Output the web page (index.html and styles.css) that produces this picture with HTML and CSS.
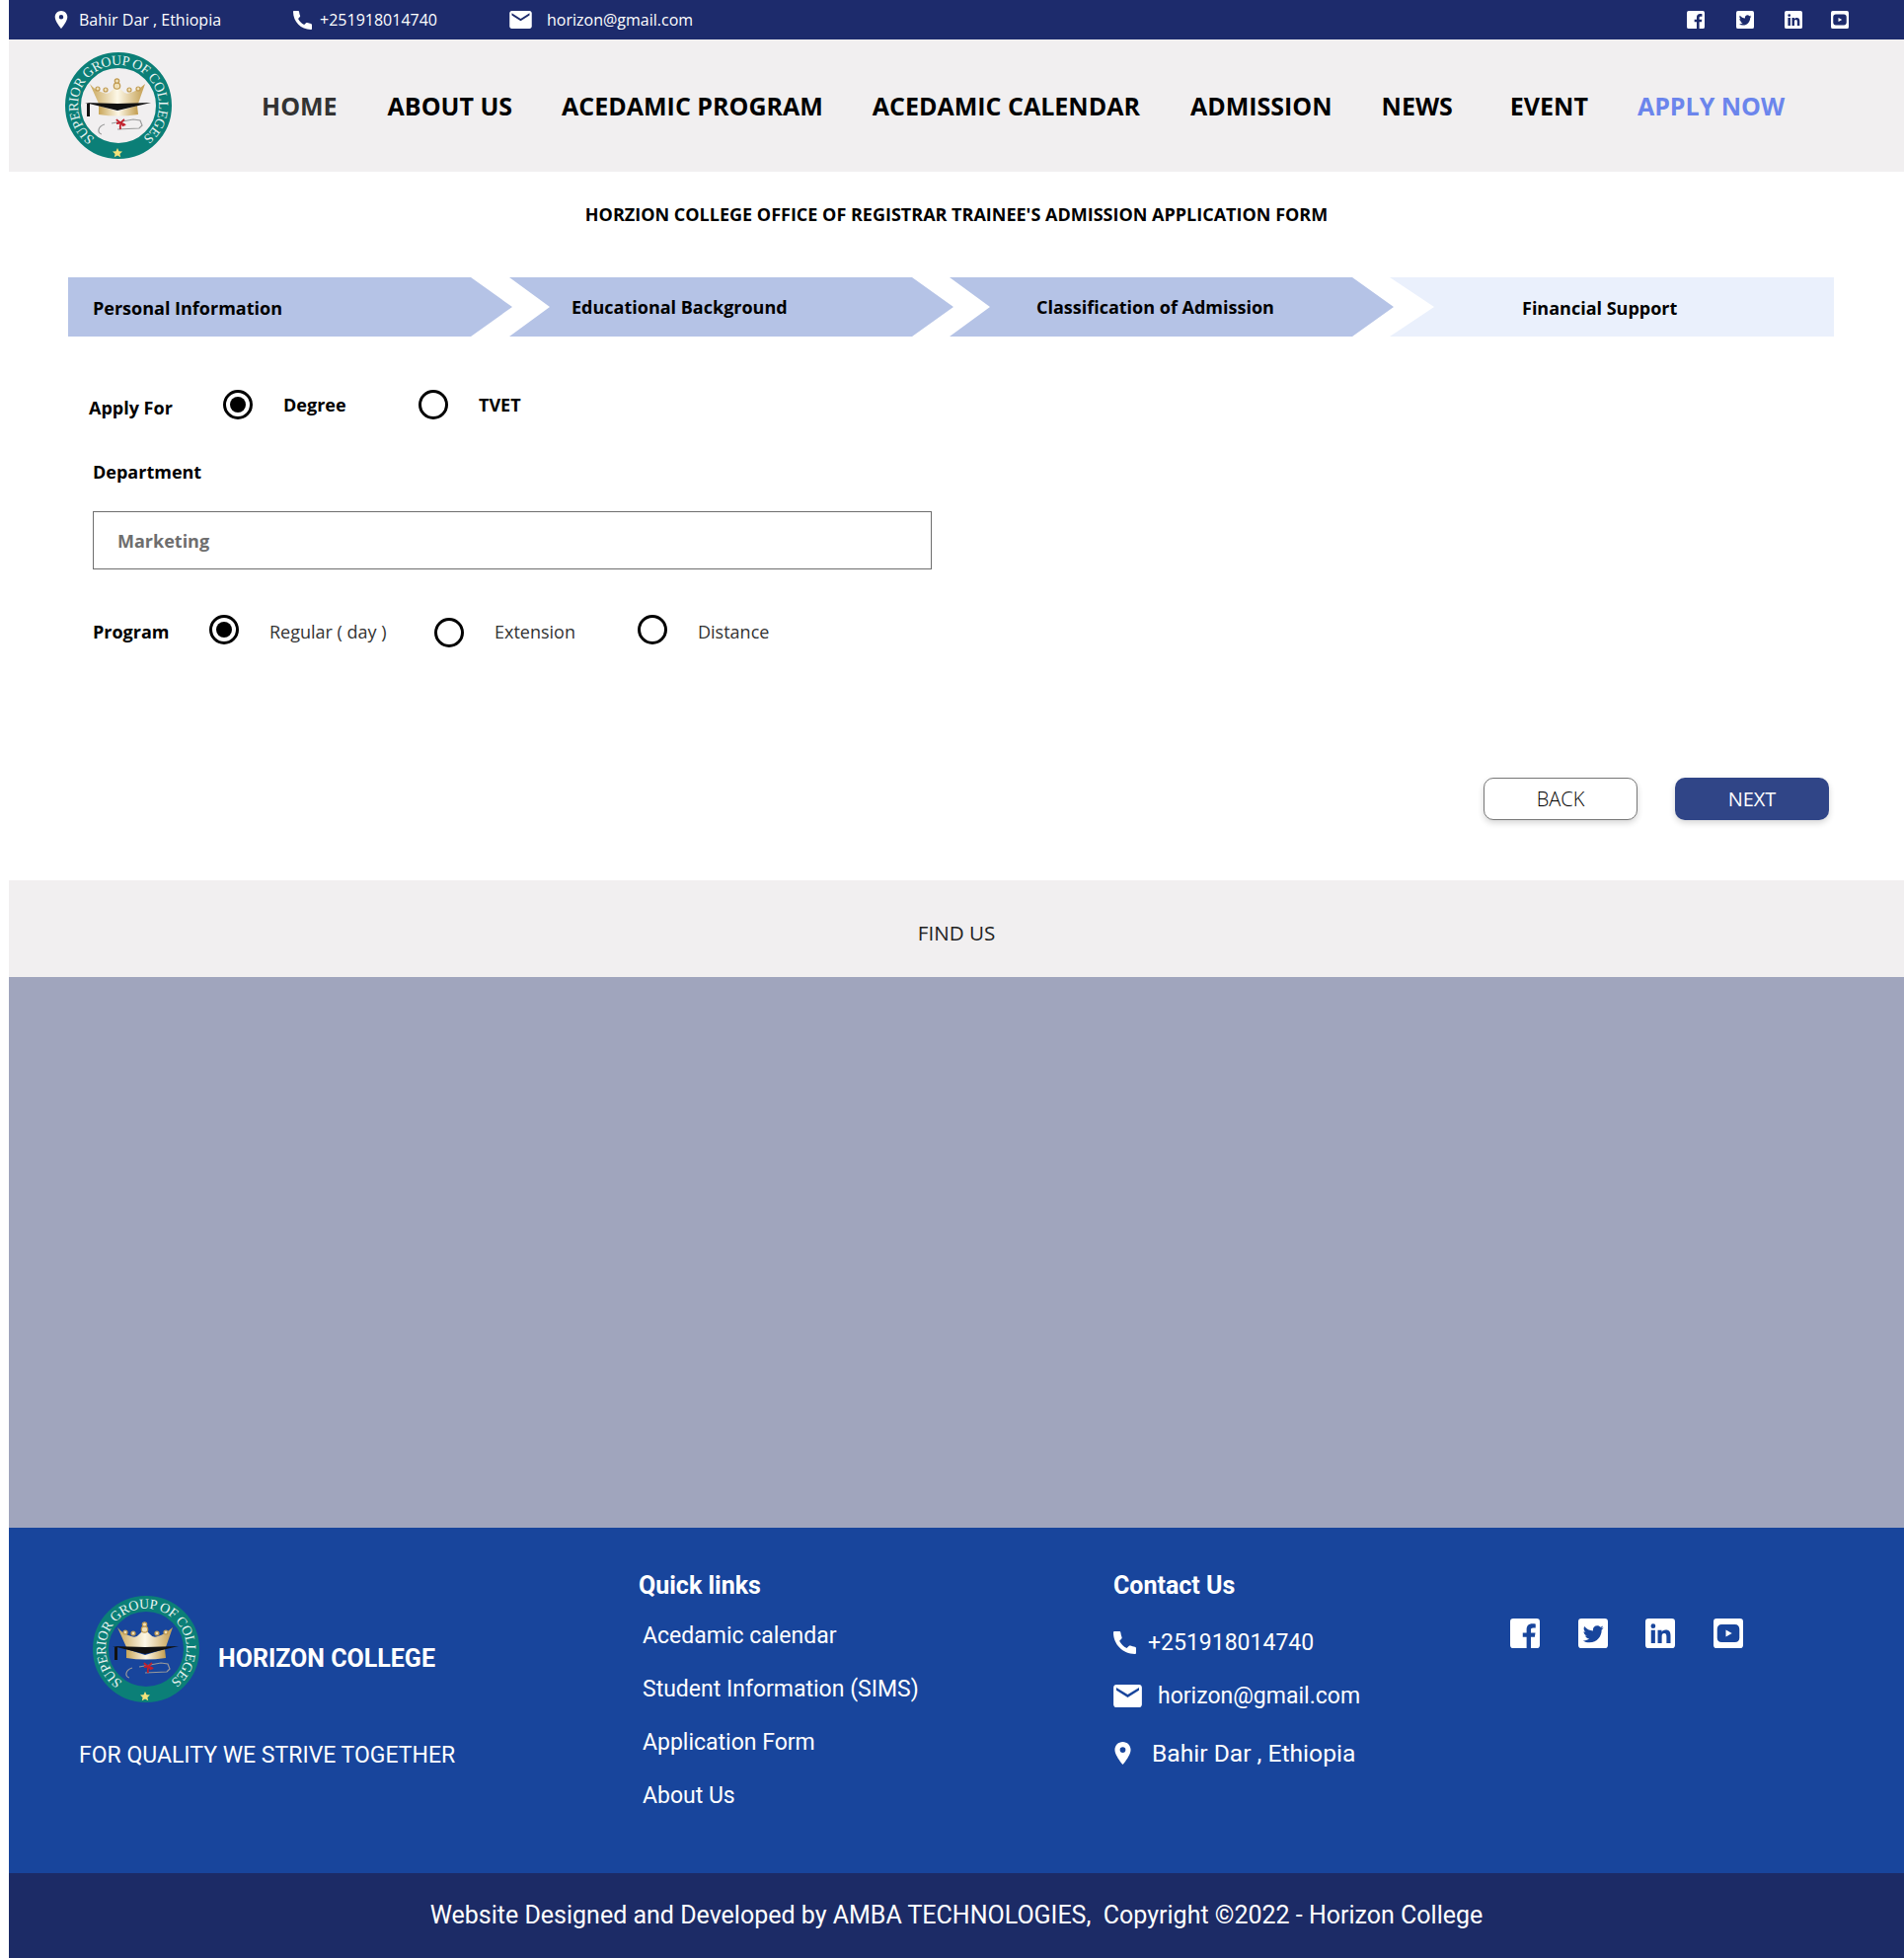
FILE: index.html
```html
<!DOCTYPE html>
<html lang="en">
<head>
<meta charset="utf-8">
<title>Horizon College - Admission Application</title>
<link rel="stylesheet" href="styles.css">
</head>
<body>
<svg class="defs" width="0" height="0" aria-hidden="true">
  <defs>
    <symbol id="i-pin" viewBox="5 2 14 20"><path fill-rule="evenodd" d="M12 2C8.100 2 5 5.100 5 9c0 5.200 7 13 7 13s7-7.800 7-13c0-3.900-3.100-7-7-7zm0 9.500a2.500 2.500 0 1 1 0-5 2.500 2.500 0 0 1 0 5z"/></symbol>
    <symbol id="i-phone" viewBox="3 3 18 18"><path d="M4 3h3.500C8.300 3 8.700 3.400 8.800 4.100C9 5.400 9.200 6.400 9.700 7.600C9.900 8.100 9.800 8.500 9.500 8.800L7.800 10.600C9.200 13.300 11 15 13.600 16.300L15.400 14.600C15.700 14.300 16.100 14.200 16.600 14.400C17.800 14.900 18.800 15.100 20.100 15.300C20.700 15.400 21 15.800 21 16.400V20C21 20.600 20.600 21 20 21C10.600 21 3 13.400 3 4C3 3.400 3.400 3 4 3z"/></symbol>
    <symbol id="i-mail" viewBox="2 4 20 16"><path d="M20 4H4c-1.100 0-2 .9-2 2v12c0 1.100.9 2 2 2h16c1.100 0 2-.9 2-2V6c0-1.100-.9-2-2-2zm0 4l-8 5-8-5V6l8 5 8-5v2z"/></symbol>
    <symbol id="i-fb" viewBox="0 0 24 24"><path fill-rule="evenodd" d="M2.500 0h19A2.500 2.500 0 0 1 24 2.500v19a2.500 2.500 0 0 1-2.500 2.500h-4.700v-9h3.100l.5-3.500h-3.600V9.300c0-1.100.4-1.800 1.900-1.800h1.900V4.300c-.4-.1-1.500-.2-2.700-.2-2.800 0-4.600 1.700-4.600 4.700v2.700H10.200V15h3.100v9H2.500A2.500 2.500 0 0 1 0 21.500v-19A2.500 2.500 0 0 1 2.500 0z"/></symbol>
    <symbol id="i-tw" viewBox="0 0 24 24"><path fill-rule="evenodd" d="M2.500 0h19A2.500 2.500 0 0 1 24 2.500v19a2.500 2.500 0 0 1-2.500 2.500h-19A2.500 2.500 0 0 1 0 21.500v-19A2.500 2.500 0 0 1 2.500 0zM20.500 7.300c-.6.300-1.300.5-2 .6.700-.4 1.300-1.100 1.500-1.900-.7.400-1.400.7-2.200.9-.6-.7-1.500-1.100-2.500-1.100-1.900 0-3.400 1.500-3.400 3.400 0 .3 0 .5.100.8-2.800-.1-5.300-1.500-7-3.600-.3.500-.5 1.100-.5 1.700 0 1.200.6 2.200 1.500 2.800-.6 0-1.100-.2-1.600-.4v0c0 1.700 1.200 3 2.800 3.400-.5.100-1 .1-1.500.1.400 1.300 1.700 2.300 3.200 2.400-1.200.9-2.700 1.500-4.300 1.500h-.8c1.500 1 3.300 1.500 5.300 1.500 6.300 0 9.800-5.200 9.800-9.800v-.4c.7-.5 1.200-1.100 1.600-1.900z"/></symbol>
    <symbol id="i-in" viewBox="0 0 24 24"><path fill-rule="evenodd" d="M2.500 0h19A2.500 2.500 0 0 1 24 2.500v19a2.500 2.500 0 0 1-2.500 2.500h-19A2.500 2.500 0 0 1 0 21.500v-19A2.500 2.500 0 0 1 2.500 0zM4.600 9.400V20h3.300V9.400zM6.300 4.200a1.900 1.900 0 1 0 0 3.800 1.900 1.900 0 0 0 0-3.800zM10 9.400V20h3.300v-5.300c0-1.400.3-2.700 2-2.700s1.800 1.500 1.800 2.800V20h3.300v-5.800c0-2.900-.6-5-4-5-1.600 0-2.700.9-3.200 1.700V9.400z"/></symbol>
    <symbol id="i-yt" viewBox="0 0 24 24"><path fill-rule="evenodd" d="M2.500 0h19A2.500 2.500 0 0 1 24 2.500v19a2.500 2.500 0 0 1-2.500 2.500h-19A2.500 2.500 0 0 1 0 21.500v-19A2.500 2.500 0 0 1 2.500 0zM6.500 4.800C4.500 4.800 3 6.300 3 8.300v7.400c0 2 1.500 3.500 3.500 3.500h11c2 0 3.500-1.500 3.500-3.500V8.300c0-2-1.500-3.500-3.500-3.500zM10 9.200l5 2.800-5 2.800z"/></symbol>
    <path id="logo-arc" d="M30 87A41 41 0 1 1 78 87"/>
    <linearGradient id="gold" x1="0" y1="0" x2="1" y2="0">
      <stop offset="0" stop-color="#c9a659"/>
      <stop offset=".5" stop-color="#fdf8e8"/>
      <stop offset="1" stop-color="#c29c4d"/>
    </linearGradient>
    <symbol id="logo" viewBox="0 0 108 108">
      <circle cx="54" cy="54" r="46" fill="none" stroke="#0b7f77" stroke-width="16"/>
      <text class="logo-text"><textPath href="#logo-arc" textLength="205" lengthAdjust="spacing">SUPERIOR GROUP OF COLLEGES</textPath></text>
      <path fill="url(#gold)" d="M25 32Q30 38 36 40L39 41Q44 43 47 39L50 36H55L58 39Q61 43 66 41Q73 39 81 32L74 52H34z"/>
      <g fill="#efe0b8" stroke="#c09a50" stroke-width="1.200">
        <circle cx="33" cy="37" r="2"/>
        <circle cx="41" cy="38" r="2"/>
        <circle cx="65" cy="38" r="2"/>
        <circle cx="74" cy="37" r="2"/>
        <circle cx="52.500" cy="34" r="3.200"/>
        <circle cx="52.500" cy="29" r="2.200"/>
      </g>
      <path fill="url(#gold)" d="M34 54L53 60L73 54L74 63Q53 66 34 63z"/>
      <path fill="#111" d="M20 51L53 52L87 51L53 59zM22 52h3v13h-3z"/>
      <path fill="none" stroke="#9a9a9a" stroke-width="1.200" d="M47 72L69 68L76 69L78 74L75 77L53 78M40 73C33 75 32 82 37 83"/>
      <path fill="none" stroke="#c2202c" stroke-width="1.800" d="M52 68C54 71 58 71 59 75M60 68C57 70 55 73 56 78M52 72C55 72 59 71 61 74"/>
      <path fill="#f5e27a" d="M53 97L54.500 100.200L58 100.600L55.400 102.900L56.200 106.300L53 104.500L49.800 106.300L50.600 102.900L48 100.600L51.500 100.200z"/>
    </symbol>
  </defs>
</svg>

<div class="topbar">
  <div class="top-item"><svg class="ic ic-pin"><use href="#i-pin"/></svg><span class="gap-11">Bahir Dar , Ethiopia</span></div>
  <div class="top-item"><svg class="ic ic-phone"><use href="#i-phone"/></svg><span class="gap-8">+251918014740</span></div>
  <div class="top-item"><svg class="ic ic-mail"><use href="#i-mail"/></svg><span class="gap-15">horizon@gmail.com</span></div>
  <div class="top-social">
    <svg class="soc-s"><use href="#i-fb"/></svg>
    <svg class="soc-s soc-2"><use href="#i-tw"/></svg>
    <svg class="soc-s soc-3"><use href="#i-in"/></svg>
    <svg class="soc-s soc-4"><use href="#i-yt"/></svg>
  </div>
</div>

<header class="nav">
  <svg class="logo-nav"><use href="#logo"/></svg>
  <nav class="menu">
    <a class="menu-home">HOME</a>
    <a>ABOUT US</a>
    <a>ACEDAMIC PROGRAM</a>
    <a>ACEDAMIC CALENDAR</a>
    <a class="menu-adm">ADMISSION</a>
    <a>NEWS</a>
    <a class="menu-event">EVENT</a>
    <a class="menu-apply">APPLY NOW</a>
  </nav>
</header>

<main class="main">
  <h1 class="title">HORZION COLLEGE OFFICE OF REGISTRAR TRAINEE'S ADMISSION APPLICATION FORM</h1>

  <div class="steps">
    <div class="step step-1"><span>Personal Information</span></div>
    <div class="step step-2"><span>Educational Background</span></div>
    <div class="step step-3"><span>Classification of Admission</span></div>
    <div class="step step-4"><span>Financial Support</span></div>
  </div>

  <form class="form">
    <div class="row row-apply">
      <span class="label label-apply">Apply For</span>
      <div class="opt opt-degree"><span class="radio on"></span><span class="opt-b">Degree</span></div>
      <div class="opt"><span class="radio"></span><span class="opt-b">TVET</span></div>
    </div>
    <div class="label dept">Department</div>
    <div class="field">Marketing</div>
    <div class="row row-program">
      <span class="label label-program">Program</span>
      <div class="opt opt-regular"><span class="radio on"></span><span class="opt-t">Regular ( day )</span></div>
      <div class="opt opt-ext"><span class="radio radio-low"></span><span class="opt-t">Extension</span></div>
      <div class="opt"><span class="radio"></span><span class="opt-t">Distance</span></div>
    </div>
  </form>

  <div class="actions">
    <button type="button" class="btn btn-back">BACK</button>
    <button type="button" class="btn btn-next">NEXT</button>
  </div>
</main>

<div class="find">FIND US</div>
<div class="map"></div>

<footer class="footer">
  <div class="col col-brand">
    <div class="brand">
      <svg class="logo-foot"><use href="#logo"/></svg>
      <span class="brand-name">HORIZON COLLEGE</span>
    </div>
    <p class="motto">FOR QUALITY WE STRIVE TOGETHER</p>
  </div>
  <div class="col col-links">
    <h2 class="foot-h">Quick links</h2>
    <ul class="links">
      <li>Acedamic calendar</li>
      <li>Student Information (SIMS)</li>
      <li>Application Form</li>
      <li>About Us</li>
    </ul>
  </div>
  <div class="col col-contact">
    <h2 class="foot-h">Contact Us</h2>
    <div class="c-row c-phone"><svg class="fc fc-phone"><use href="#i-phone"/></svg><span>+251918014740</span></div>
    <div class="c-row c-mail"><svg class="fc fc-mail"><use href="#i-mail"/></svg><span>horizon@gmail.com</span></div>
    <div class="c-row c-pin"><svg class="fc fc-pin"><use href="#i-pin"/></svg><span>Bahir Dar , Ethiopia</span></div>
  </div>
  <div class="col col-social">
    <svg class="soc-l"><use href="#i-fb"/></svg>
    <svg class="soc-l"><use href="#i-tw"/></svg>
    <svg class="soc-l"><use href="#i-in"/></svg>
    <svg class="soc-l"><use href="#i-yt"/></svg>
  </div>
</footer>
<div class="copyright">Website Designed and Developed by AMBA TECHNOLOGIES,&nbsp; Copyright ©2022 - Horizon College</div>
</body>
</html>
```

FILE: styles.css
```css
* { box-sizing: border-box; }
html, body { margin: 0; }
body {
  width: 1929px;
  height: 1984px;
  padding-left: 9px;
  overflow: hidden;
  background: #fff;
  font-family: "Open Sans", sans-serif;
  color: #000;
}
.defs { position: absolute; }
svg { display: block; flex: none; }
.logo-text { font-family: "Liberation Serif", serif; font-size: 14px; fill: #e8f3f1; }

/* top bar */
.topbar {
  width: 1920px;
  height: 40px;
  padding: 0 56px 0 46px;
  display: flex;
  align-items: center;
  background: #1d2b6c;
  color: #fff;
  font-size: 16px;
}
.top-item { display: flex; align-items: center; margin-right: 73px; }
.top-item .ic { fill: #fff; }
.ic-pin { width: 14px; height: 18px; }
.ic-phone { width: 19px; height: 19px; }
.ic-mail { width: 23px; height: 18px; }
.gap-11 { margin-left: 11px; }
.gap-8 { margin-left: 8px; }
.gap-15 { margin-left: 15px; }
.top-social { display: flex; margin-left: auto; margin-right: 0; }
.soc-s { width: 18px; height: 18px; fill: #fff; }
.soc-2 { margin-left: 32px; }
.soc-3 { margin-left: 31px; }
.soc-4 { margin-left: 29px; }

/* nav */
.nav {
  width: 1920px;
  height: 134px;
  padding-left: 57px;
  display: flex;
  align-items: center;
  background: #f1eff0;
}
.logo-nav { width: 108px; height: 108px; }
.menu {
  display: flex;
  gap: 50px;
  margin-left: 91px;
  font-size: 25px;
  font-weight: 700;
  line-height: 34px;
  white-space: nowrap;
}
.menu-home { color: #333; margin-right: 1px; }
.menu-adm { margin-left: 1px; }
.menu-event { margin-left: 8px; }
.menu-apply { color: #6b85ec; }

/* main */
.main { width: 1920px; height: 718px; }
.title {
  margin: 0;
  padding-top: 32px;
  text-align: center;
  font-size: 18px;
  line-height: 22px;
  font-weight: 700;
}
.steps { display: flex; margin: 53px 0 0 60px; }
.step {
  width: 450px;
  height: 60px;
  margin-left: -4px;
  display: flex;
  align-items: center;
  background: #b5c3e6;
  font-size: 18px;
  font-weight: 700;
  clip-path: polygon(0 0, 408px 0, 100% 50%, 408px 100%, 0 100%, 41px 50%);
}
.step-1 {
  margin-left: 0;
  padding: 2px 0 0 25px;
  clip-path: polygon(0 0, 408px 0, 100% 50%, 408px 100%, 0 100%);
}
.step-2 { margin-left: -3px; padding-left: 63px; }
.step-3 { padding-left: 88px; }
.step-4 {
  padding: 2px 0 0 134px;
  background: #eaf0fc;
  clip-path: polygon(0 0, 100% 0, 100% 100%, 0 100%, 45px 50%);
}

/* form */
.form { padding-left: 85px; }
.row { display: flex; align-items: flex-start; }
.label { font-size: 18px; line-height: 24px; font-weight: 700; }
.row-apply { margin-top: 54px; margin-left: -4px; }
.label-apply { width: 136px; margin-top: 6px; }
.opt { display: flex; align-items: flex-start; }
.opt-degree { width: 198px; }
.radio {
  width: 30px;
  height: 30px;
  flex: none;
  display: flex;
  align-items: center;
  justify-content: center;
  border: 3px solid #000;
  border-radius: 50%;
}
.radio.on::after {
  content: "";
  width: 16px;
  height: 16px;
  border-radius: 50%;
  background: #000;
}
.radio-low { margin-top: 3px; }
.opt-b { margin-left: 31px; margin-top: 3px; font-size: 18px; line-height: 24px; font-weight: 700; }
.opt-t { margin-left: 31px; margin-top: 5px; font-size: 18px; line-height: 24px; color: #333; }
.dept { margin-top: 41px; }
.field {
  width: 850px;
  height: 59px;
  margin-top: 28px;
  padding: 1px 0 0 24px;
  display: flex;
  align-items: center;
  border: 1px solid #6e6e6e;
  font-size: 18px;
  font-weight: 700;
  color: #6e6e6e;
}
.row-program { margin-top: 46px; }
.label-program { width: 118px; margin-top: 5px; }
.opt-regular { width: 228px; }
.opt-ext { width: 206px; }

/* buttons */
.actions { display: flex; justify-content: flex-end; gap: 38px; margin-top: 132px; padding-right: 76px; }
.btn {
  width: 156px;
  height: 43px;
  padding: 0;
  border-radius: 10px;
  font-family: inherit;
  font-size: 20px;
  box-shadow: 0 3px 6px rgba(0, 0, 0, .16);
}
.btn-back { background: #fff; color: #000; border: 1px solid #777; font-weight: 300; }
.btn-next { background: #304587; color: #fff; border: 0; }

/* find us + map */
.find {
  width: 1920px;
  height: 98px;
  padding-top: 39px;
  background: #f1eff0;
  text-align: center;
  font-size: 20.600px;
  line-height: 28px;
  color: #222;
}
.map { width: 1920px; height: 558px; background: #a0a5bd; }

/* footer */
.footer {
  width: 1920px;
  height: 350px;
  display: flex;
  background: #18459c;
  color: #fff;
  font-family: Roboto, sans-serif;
}
.col-brand { width: 638px; padding: 69px 0 0 71px; }
.brand { display: flex; align-items: center; margin-left: 14px; }
.logo-foot { width: 108px; height: 108px; }
.brand-name { margin-left: 19px; margin-top: 19px; font-size: 25px; font-weight: 700; line-height: 30px; }
.motto { margin: 39px 0 0; font-size: 23px; line-height: 30px; }
.col-links { width: 481px; padding-top: 44px; }
.foot-h { margin: 0; font-size: 25px; font-weight: 700; line-height: 30px; }
.links { list-style: none; margin: 9px 0 0 4px; padding: 0; font-size: 23px; }
.links li { height: 54px; line-height: 54px; }
.col-contact { width: 402px; padding-top: 44px; }
.c-row { display: flex; align-items: center; height: 30px; font-size: 23px; }
.c-row svg { fill: #fff; }
.c-phone { margin-top: 27px; }
.c-mail { margin-top: 24px; }
.c-pin { margin-top: 28px; font-size: 24.600px; }
.fc-phone { width: 23px; height: 23px; margin-right: 12px; }
.fc-mail { width: 29px; height: 23px; margin-right: 16px; }
.fc-pin { width: 17px; height: 23px; margin-right: 21px; margin-left: 1px; }
.col-social { display: flex; gap: 38.600px; padding-top: 92px; }
.soc-l { width: 30px; height: 30px; fill: #fff; }

.copyright {
  width: 1920px;
  height: 86px;
  background: #1c2b66;
  color: #fff;
  text-align: center;
  font-family: Roboto, sans-serif;
  font-size: 25px;
  line-height: 85px;
}
```
